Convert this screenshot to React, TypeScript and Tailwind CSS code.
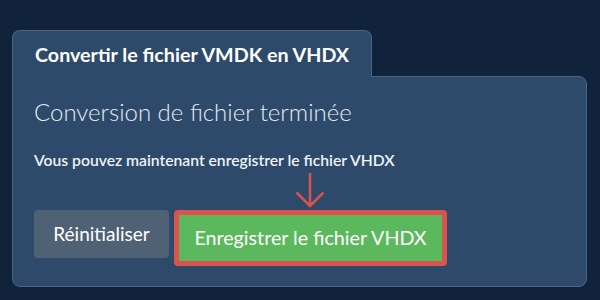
export default function App() {
  return (
    <div
      className="w-[600px] h-[300px] bg-[#10233a] pt-[30px] pl-[12px]"
      style={{ fontFamily: 'Lato, "Noto Sans", sans-serif' }}
    >
      <div className="flex flex-col w-[575px]">
        {/* Tab */}
        <div className="relative z-10 -mb-px w-[360px] h-[47px] bg-[#2d4a6b] border-t border-x border-[#4b6585] rounded-t-lg pl-[22px] pt-[12px]">
          <h1 className="text-[19.7px] font-bold text-white leading-[24px]">
            Convertir le fichier VMDK en VHDX
          </h1>
        </div>

        {/* Body */}
        <div className="h-[211px] bg-[#2d4a6b] border border-[#4b6585] rounded-b-lg rounded-tr-lg px-[21px] pt-[20px]">
          <h2 className="text-[24px] font-light text-[#e6ebf1] leading-[30px]">
            Conversion de fichier terminée
          </h2>
          <p className="mt-[23px] text-[15.7px] font-semibold text-[#eef2f6] leading-[20px]">
            Vous pouvez maintenant enregistrer le fichier VHDX
          </p>

          <div className="flex flex-col items-start">
            <div className="ml-[261px] mt-[2px] h-[36px]">
              <svg width="30" height="36" viewBox="0 0 30 36" fill="none">
                <path
                  d="M15 1 L15 34 M1.5 20.5 L15 34 L28.5 20.5"
                  stroke="#d9534f"
                  strokeWidth="2.5"
                />
              </svg>
            </div>
            <div className="flex items-start gap-[5px] mt-[2px]">
              <button className="w-[135px] h-[48px] rounded bg-[#4f6175] text-white text-[19px]">
                Réinitialiser
              </button>
              <div className="border-[5px] border-[#d9534f] rounded-[4px]">
                <button className="w-[263px] h-[46px] bg-[#5cb85c] text-white text-[19.7px]">
                  Enregistrer le fichier VHDX
                </button>
              </div>
            </div>
          </div>
        </div>
      </div>
    </div>
  );
}
